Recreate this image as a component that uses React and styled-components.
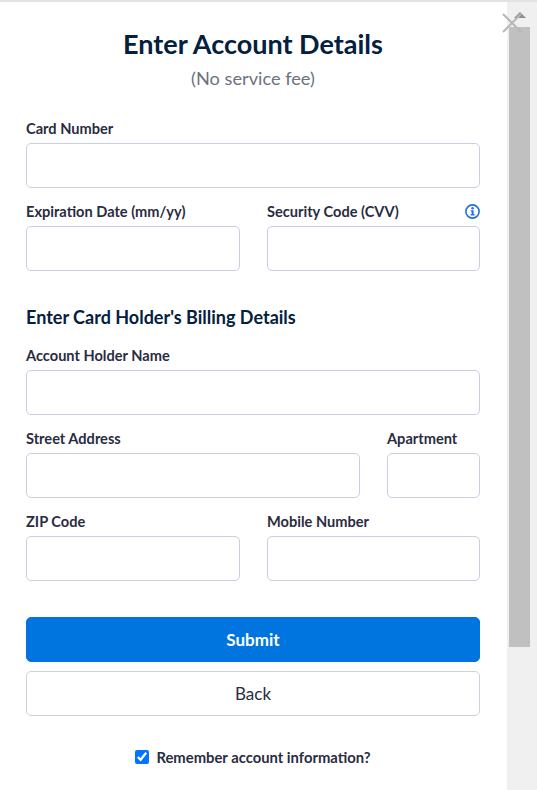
import React from 'react';
import styled, { createGlobalStyle } from 'styled-components';

const Global = createGlobalStyle`
  html, body { margin: 0; padding: 0; height: 100%; overflow: hidden; background: #fff; }
  body { font-family: "Lato", "Liberation Sans", sans-serif; }
  * { box-sizing: border-box; }
`
const Modal = styled.div`
  position: relative;
  display: flex;
  width: 537px;
  height: 790px;
  overflow: hidden;
  border-top: 2px solid #e3e3e3;
`
const Content = styled.div`
  flex: 1;
  padding: 0 27px 0 26px;
`
const Title = styled.h1`
  margin: 26px 0 0;
  font-size: 27px;
  line-height: 32px;
  font-weight: 700;
  color: #04203f;
  text-align: center;
`
const Subtitle = styled.p`
  margin: 6px 0 0;
  font-size: 18.2px;
  line-height: 24px;
  color: #6b7280;
  text-align: center;
`
const Form = styled.form`
  display: flex;
  flex-direction: column;
  gap: 12px;
  margin-top: 27px;
`
const Row = styled.div`
  display: grid;
  grid-template-columns: ${p => p.$cols || '1fr'};
  column-gap: 27px;
`
const Field = styled.div`
  display: flex;
  flex-direction: column;
  min-width: 0;
`
const LabelRow = styled.div`
  display: flex;
  justify-content: space-between;
  align-items: center;
  height: 22px;
  margin-bottom: 4px;
`
const Label = styled.label`
  font-size: 14.6px;
  font-weight: 700;
  color: #2a2c3f;
`
const Input = styled.input`
  width: 100%;
  height: 45px;
  border: 1px solid #c8cfdf;
  border-radius: 5px;
  background: #fff;
  outline: none;
`
const SectionTitle = styled.h2`
  margin: 22px 0 3px;
  font-size: 18px;
  line-height: 24px;
  font-weight: 700;
  color: #04203f;
`
const Actions = styled.div`
  display: flex;
  flex-direction: column;
  gap: 9px;
  margin-top: 24px;
`
const Button = styled.button`
  width: 100%;
  height: 45px;
  border-radius: 5px;
  font-family: inherit;
  font-size: 17px;
  font-weight: ${p => (p.$primary ? 700 : 400)};
  color: ${p => (p.$primary ? '#fff' : '#2a2c3f')};
  background: ${p => (p.$primary ? '#0075e0' : '#fff')};
  border: 1px solid ${p => (p.$primary ? '#0075e0' : '#cfd1dc')};
`
const Remember = styled.label`
  display: flex;
  justify-content: center;
  align-items: center;
  gap: 7px;
  margin-top: 32px;
  font-size: 14.8px;
  font-weight: 700;
  color: #2a2c3f;
`
const Check = styled.input`
  width: 14px;
  height: 14px;
  margin: 0;
`
const Track = styled.div`
  display: flex;
  flex-direction: column;
  align-items: center;
  width: 30px;
  background: #f0f0f0;
  padding: 10px 7px 0 2px;
`
const Arrow = styled.div`
  width: 0;
  height: 0;
  border-left: 6px solid transparent;
  border-right: 6px solid transparent;
  border-bottom: 6px solid #8f8f8f;
  margin-bottom: 9px;
`
const Thumb = styled.div`
  width: 21px;
  height: 620px;
  background: #c0c0c0;
`
const Close = styled.svg`
  position: absolute;
  top: 11px;
  right: 15px;
  width: 20px;
  height: 20px;
  stroke: #b8b8b8;
  stroke-width: 2;
`
const InfoIcon = () => (
  <svg width="15" height="15" viewBox="0 0 15 15">
    <circle cx="7.5" cy="7.5" r="6.6" fill="none" stroke="#1f6fdc" strokeWidth="1.6" />
    <circle cx="7.5" cy="4.2" r="1.2" fill="#1f6fdc" />
    <path d="M5.8 6.2h2.8v4h1v1.2H5.6v-1.2h1V7.4h-.8z" fill="#1f6fdc" />
  </svg>
)

function App() {
  return (
    <Modal>
      <Global />
      <Content>
        <Title>Enter Account Details</Title>
        <Subtitle>(No service fee)</Subtitle>
        <Form>
          <Row>
            <Field>
              <LabelRow><Label>Card Number</Label></LabelRow>
              <Input />
            </Field>
          </Row>
          <Row $cols="214px 213px">
            <Field>
              <LabelRow><Label>Expiration Date (mm/yy)</Label></LabelRow>
              <Input />
            </Field>
            <Field>
              <LabelRow><Label>Security Code (CVV)</Label><InfoIcon /></LabelRow>
              <Input />
            </Field>
          </Row>
          <SectionTitle>Enter Card Holder's Billing Details</SectionTitle>
          <Row>
            <Field>
              <LabelRow><Label>Account Holder Name</Label></LabelRow>
              <Input />
            </Field>
          </Row>
          <Row $cols="334px 93px">
            <Field>
              <LabelRow><Label>Street Address</Label></LabelRow>
              <Input />
            </Field>
            <Field>
              <LabelRow><Label>Apartment</Label></LabelRow>
              <Input />
            </Field>
          </Row>
          <Row $cols="214px 213px">
            <Field>
              <LabelRow><Label>ZIP Code</Label></LabelRow>
              <Input />
            </Field>
            <Field>
              <LabelRow><Label>Mobile Number</Label></LabelRow>
              <Input />
            </Field>
          </Row>
          <Actions>
            <Button type="button" $primary>Submit</Button>
            <Button type="button">Back</Button>
          </Actions>
        </Form>
        <Remember>
          <Check type="checkbox" defaultChecked />
          Remember account information?
        </Remember>
      </Content>
      <Track>
        <Arrow />
        <Thumb />
      </Track>
      <Close viewBox="0 0 20 20"><path d="M1 1l18 18M19 1L1 19" /></Close>
    </Modal>
  );
}

export default App;
